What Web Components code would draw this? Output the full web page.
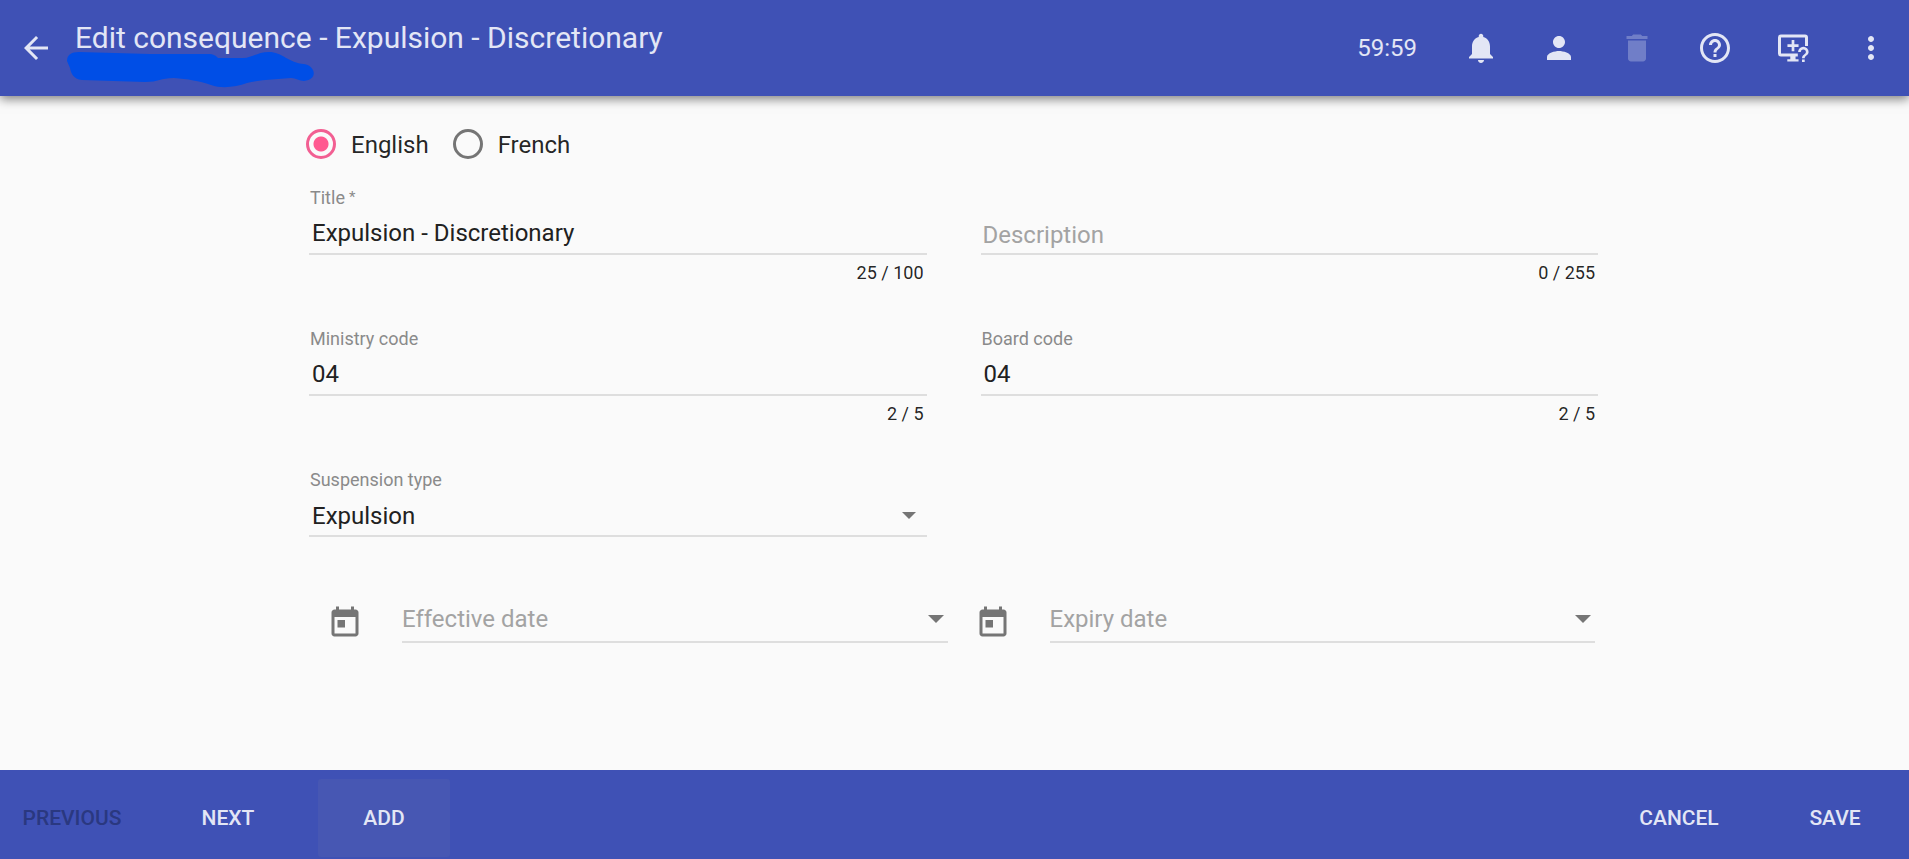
<!DOCTYPE html>
<html lang="en">
<head>
<meta charset="utf-8">
<meta name="viewport" content="width=device-width, initial-scale=1">
<title>Edit consequence</title>
<style>
html, body { height: 100%; }
body { margin: 0; font-family: Roboto, "Liberation Sans", sans-serif; font-size: 24px; background: #fafafa; color: rgba(0,0,0,.87); }
</style>
</head>
<body>
<consequence-page></consequence-page>
<script>
const define = (name, html, setup) => {
  const template = document.createElement('template');
  template.innerHTML = html;
  customElements.define(name, class extends HTMLElement {
    connectedCallback() {
      if (this.shadowRoot) return;
      this.attachShadow({ mode: 'open' }).append(template.content.cloneNode(true));
      if (setup) setup(this, this.shadowRoot);
    }
  });
};

const ICONS = {
  back: '<path d="M20 11H7.83l5.59-5.59L12 4l-8 8 8 8 1.41-1.41L7.83 13H20v-2z"/>',
  bell: '<path d="M12 22c1.1 0 2-.9 2-2h-4c0 1.1.89 2 2 2zm6-6v-5c0-3.07-1.64-5.64-4.5-6.32V4c0-.83-.67-1.5-1.5-1.5s-1.5.67-1.5 1.5v.68C7.63 5.36 6 7.92 6 11v5l-2 2v1h16v-1l-2-2z"/>',
  person: '<path d="M12 12c2.21 0 4-1.79 4-4s-1.79-4-4-4-4 1.79-4 4 1.79 4 4 4zm0 2c-2.67 0-8 1.34-8 4v2h16v-2c0-2.66-5.33-4-8-4z"/>',
  trash: '<path d="M6 19c0 1.1.9 2 2 2h8c1.1 0 2-.9 2-2V7H6v12zM19 4h-3.5l-1-1h-5l-1 1H5v2h14V4z"/>',
  help: '<path d="M11 18h2v-2h-2v2zm1-16C6.48 2 2 6.48 2 12s4.48 10 10 10 10-4.48 10-10S17.52 2 12 2zm0 18c-4.41 0-8-3.59-8-8s3.59-8 8-8 8 3.59 8 8-3.59 8-8 8zm0-14c-2.21 0-4 1.79-4 4h2c0-1.1.9-2 2-2s2 .9 2 2c0 2-3 1.75-3 5h2c0-2.25 3-2.5 3-5 0-2.21-1.79-4-4-4z"/>',
  screen: '<path d="M4 3h16a2 2 0 0 1 2 2v5.700h-2V5H4v10.700h11.200v2H13.700v1.800h2V21H8.200v-1.500h2v-1.800H4a2 2 0 0 1-2-2V5a2 2 0 0 1 2-2z"/><path d="M11.100 6.700h1.800v2.800h2.800v1.800h-2.800v2.800h-1.800v-2.800H8.300V9.500h2.800z"/><path d="M18 19.600h1.800v1.700H18zM18.900 11.200a3.500 3.500 0 0 0-3.500 3.500h1.800a1.700 1.700 0 0 1 3.400 0c0 1.600-2.600 1.700-2.600 4.100h1.800c0-1.600 2.600-2 2.600-4.100a3.500 3.500 0 0 0-3.500-3.500z"/>',
  more: '<path d="M12 8c1.100 0 2-.9 2-2s-.9-2-2-2-2 .9-2 2 .9 2 2 2zm0 2c-1.100 0-2 .9-2 2s.9 2 2 2 2-.9 2-2-.9-2-2-2zm0 6c-1.100 0-2 .9-2 2s.9 2 2 2 2-.9 2-2-.9-2-2-2z"/>',
  calendar: '<path d="M19 3h-1V1h-2v2H8V1H6v2H5c-1.110 0-1.990.9-1.990 2L3 19c0 1.100.89 2 2 2h14c1.100 0 2-.9 2-2V5c0-1.100-.9-2-2-2zm0 16H5V8h14v11zM7 10h5v5H7z"/>'
};

define('app-icon', `
<style>
:host { display: block; width: 36px; height: 36px; flex: none; }
svg { display: block; width: 100%; height: 100%; fill: currentColor; }
</style>
<svg viewBox="0 0 24 24" aria-hidden="true"></svg>`, (host, root) => {
  root.querySelector('svg').innerHTML = ICONS[host.getAttribute('name')];
});

define('icon-button', `
<style>
:host { display: block; flex: none; }
button { display: grid; place-items: center; width: 60px; height: 60px; padding: 0; border: 0; background: none; color: inherit; cursor: pointer; }
button:disabled { opacity: .3; cursor: default; }
</style>
<button type="button"></button>`, (host, root) => {
  const button = root.querySelector('button');
  button.setAttribute('aria-label', host.getAttribute('label'));
  button.disabled = host.hasAttribute('disabled');
  const icon = document.createElement('app-icon');
  icon.setAttribute('name', host.getAttribute('icon'));
  button.replaceChildren(icon);
});

define('text-button', `
<style>
:host { display: block; }
button { box-sizing: border-box; min-width: 132px; height: 78px; padding: 0 12px; border: 0; border-radius: 3px; background: none; color: #e3e6f5; font: 500 21px/30px Roboto, "Liberation Sans", sans-serif; text-transform: uppercase; cursor: pointer; }
button:disabled { color: #2a3880; cursor: default; }
:host([active]) button { background: #4757b3; }
</style>
<button type="button"><slot></slot></button>`, (host, root) => {
  root.querySelector('button').disabled = host.hasAttribute('disabled');
});

define('app-toolbar', `
<style>
:host { display: flex; align-items: center; height: 96px; box-sizing: border-box; padding: 0 8px 0 6px; background: #3f51b5; color: #e3e6f5; box-shadow: 0 3px 10px rgba(0,0,0,.5); z-index: 1; flex: none; }
.heading { position: relative; align-self: flex-start; flex: 1; padding: 18px 0 0 9px; min-width: 0; }
h1 { margin: 0; font-size: 30px; line-height: 40px; font-weight: 400; white-space: nowrap; }
.mark { position: absolute; left: 0; top: 51px; width: 250px; height: 38px; fill: #004ee6; }
.actions { display: flex; align-items: center; gap: 18px; }
time { margin-right: 16px; }
</style>
<icon-button icon="back" label="Back"></icon-button>
<div class="heading">
  <h1><slot></slot></h1>
  <svg class="mark" viewBox="66 51 250 38" aria-hidden="true"><path d="M67 61C67 55 71 52 79 52L150 54L208 54C214 54 216 56 218 58L243 58C252 58 257 52 269 52C282 52 289 63 304 64C316 66 318 80 304 81C299 81 296 78 291 78C275 79 260 80 247 83C236 87 222 89 211 85C199 81 188 79 174 78C160 78 159 82 145 82L82 80C73 79 71 73 70 68Z"/></svg>
</div>
<div class="actions">
  <time>59:59</time>
  <icon-button icon="bell" label="Notifications"></icon-button>
  <icon-button icon="person" label="Account"></icon-button>
  <icon-button icon="trash" label="Delete" disabled></icon-button>
  <icon-button icon="help" label="Help"></icon-button>
  <icon-button icon="screen" label="Screen help"></icon-button>
  <icon-button icon="more" label="More"></icon-button>
</div>`);

define('language-choice', `
<style>
:host { display: block; }
fieldset { display: flex; gap: 24px; margin: 0; padding: 0; border: 0; }
label { display: flex; align-items: flex-start; gap: 15px; line-height: 34px; }
input { appearance: none; box-sizing: border-box; flex: none; width: 30px; height: 30px; margin: 1px 0 0; border: 3px solid #757575; border-radius: 50%; }
input:checked { border-color: #f25f92; background: radial-gradient(circle, #ff5990 7px, transparent 8px); }
</style>
<fieldset aria-label="Language">
  <label><input type="radio" name="language" checked>English</label>
  <label><input type="radio" name="language">French</label>
</fieldset>`);

define('text-field', `
<style>
:host { display: block; min-width: 0; }
label { display: flex; gap: 4px; height: 24px; padding-left: 1px; font-size: 18px; line-height: 24px; color: #8a8a8a; }
:host([required]) label::after { content: "*"; font-size: 15px; line-height: 22px; }
input { display: block; box-sizing: border-box; width: 100%; height: 45px; margin: 0; padding: 2px 3px 0; border: 0; border-bottom: 2px solid #dedede; border-radius: 0; outline: 0; background: none; color: #212121; font: 24px/32px Roboto, "Liberation Sans", sans-serif; }
input::placeholder { color: #a3a3a3; opacity: 1; }
input:placeholder-shown { padding: 6px 2px 0; }
output { display: block; padding: 6px 3px 0 0; font-size: 18px; line-height: 24px; text-align: right; }
</style>
<label for="field"></label>
<input id="field" type="text">
<output for="field"></output>`, (host, root) => {
  const input = root.querySelector('input');
  const output = root.querySelector('output');
  const max = host.getAttribute('max');
  input.maxLength = max;
  input.required = host.hasAttribute('required');
  input.value = host.getAttribute('value') || '';
  const label = host.getAttribute('label');
  if (label) root.querySelector('label').textContent = label;
  const placeholder = host.getAttribute('placeholder');
  if (placeholder) { input.placeholder = placeholder; input.setAttribute('aria-label', placeholder); }
  const count = () => { output.textContent = input.value.length + ' / ' + max; };
  input.addEventListener('input', count);
  count();
});

define('select-field', `
<style>
:host { display: block; min-width: 0; }
label { display: block; padding-left: 1px; font-size: 18px; line-height: 24px; color: #8a8a8a; }
.control { display: grid; grid-template-columns: 1fr; align-items: center; border-bottom: 2px solid #dedede; }
select { grid-area: 1 / 1; appearance: none; width: 100%; height: 43px; margin: 0; padding: 5px 32px 0 3px; border: 0; border-radius: 0; outline: 0; background: none; color: #212121; font: 24px/32px Roboto, "Liberation Sans", sans-serif; }
.arrow { grid-area: 1 / 1; justify-self: end; margin: 4px 11px 0 0; border: 7px solid transparent; border-top-color: #757575; border-bottom: 0; pointer-events: none; }
</style>
<label for="field"></label>
<div class="control">
  <select id="field"><option>Expulsion</option><option>Suspension</option></select>
  <span class="arrow"></span>
</div>`, (host, root) => {
  root.querySelector('label').textContent = host.getAttribute('label');
});

define('date-field', `
<style>
:host { display: flex; align-items: flex-start; min-width: 0; }
app-icon { margin: 13px 39px 0 0; color: #757575; }
.control { display: flex; align-items: center; flex: 1; min-width: 0; height: 44px; padding-top: 5px; border-bottom: 2px solid #dedede; }
input { flex: 1; min-width: 0; width: 0; height: 36px; margin: 0; padding: 0; border: 0; outline: 0; background: none; color: #212121; font: 24px/32px Roboto, "Liberation Sans", sans-serif; }
input::placeholder { color: #a3a3a3; opacity: 1; }
button { width: 24px; height: 36px; display: grid; place-items: center; padding: 0; border: 0; background: none; }
button::before { content: ""; border: 8px solid transparent; border-top-color: #757575; border-bottom: 0; }
</style>
<app-icon name="calendar"></app-icon>
<div class="control"><input type="text"><button type="button" aria-label="Open calendar"></button></div>`, (host, root) => {
  const input = root.querySelector('input');
  input.placeholder = host.getAttribute('label');
  input.setAttribute('aria-label', host.getAttribute('label'));
});

define('consequence-form', `
<style>
:host { display: block; flex: 1; padding: 32px 26px 32px 24px; }
form { max-width: 1289px; margin: 0 auto; }
language-choice { margin: 0 0 24px -3px; }
.fields { display: grid; grid-template-columns: 1fr 1fr; column-gap: 54px; row-gap: 42px; }
.dates { display: grid; grid-template-columns: 1fr 1fr; column-gap: 27px; padding: 55px 3px 0 18px; }
</style>
<form>
  <language-choice></language-choice>
  <div class="fields">
    <text-field label="Title" required value="Expulsion - Discretionary" max="100"></text-field>
    <text-field placeholder="Description" max="255"></text-field>
    <text-field label="Ministry code" value="04" max="5"></text-field>
    <text-field label="Board code" value="04" max="5"></text-field>
    <select-field label="Suspension type"></select-field>
  </div>
  <div class="dates">
    <date-field label="Effective date"></date-field>
    <date-field label="Expiry date"></date-field>
  </div>
</form>`);

define('action-bar', `
<style>
:host { display: flex; justify-content: space-between; box-sizing: border-box; flex: none; padding: 9px 8px 2px 6px; background: #3f51b5; }
div { display: flex; gap: 24px; }
</style>
<div><slot name="start"></slot></div>
<div><slot name="end"></slot></div>`);

define('consequence-page', `
<style>
:host { display: flex; flex-direction: column; min-height: 100vh; }
</style>
<app-toolbar>Edit consequence - Expulsion - Discretionary</app-toolbar>
<consequence-form></consequence-form>
<action-bar>
  <text-button slot="start" disabled>Previous</text-button>
  <text-button slot="start">Next</text-button>
  <text-button slot="start" active>Add</text-button>
  <text-button slot="end">Cancel</text-button>
  <text-button slot="end">Save</text-button>
</action-bar>`);
</script>
</body>
</html>
